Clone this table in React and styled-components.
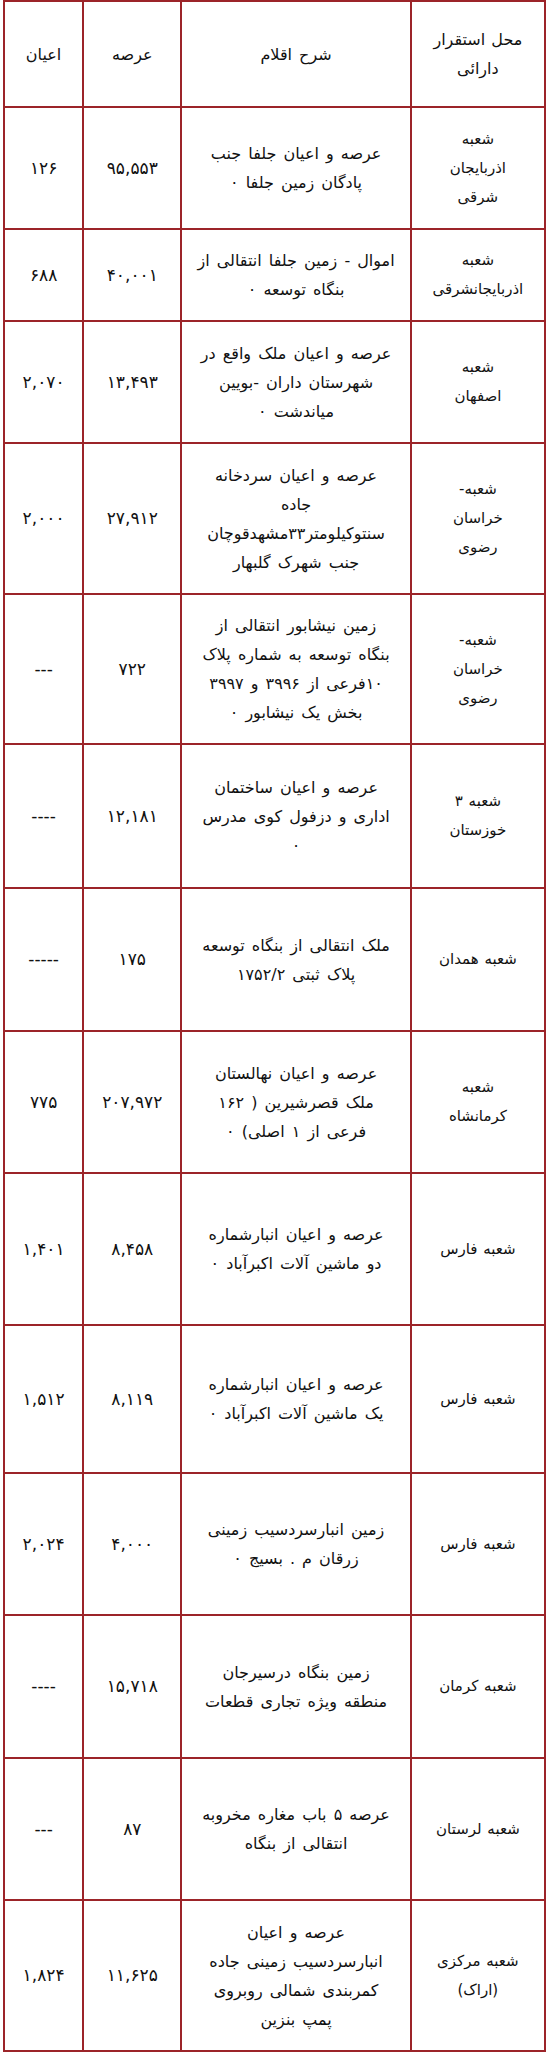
import React from "react";
import styled, { createGlobalStyle } from "styled-components";

const GlobalStyle = createGlobalStyle`
  html, body {
    margin: 0;
    padding: 0;
    background: #ffffff;
  }
  body {
    font-family: "DejaVu Sans", "Noto Sans", sans-serif;
    color: #111111;
  }
`;

// ستون‌ها از راست به چپ
const columns = [
  { key: "place", width: 134, kind: "place" },
  { key: "desc", width: 229, kind: "desc" },
  { key: "arse", width: 98, kind: "num" },
  { key: "ayan", width: 79, kind: "num" },
];

const header = {
  h: 106,
  place: ["محل استقرار", "دارائی"],
  desc: ["شرح اقلام"],
  arse: ["عرصه"],
  ayan: ["اعیان"],
};

const rows = [
  {
    h: 122,
    place: ["شعبه", "اذربایجان", "شرقی"],
    desc: ["عرصه و اعیان جلفا جنب", "پادگان زمین جلفا  ۰"],
    arse: "۹۵,۵۵۳",
    ayan: "۱۲۶",
  },
  {
    h: 92,
    place: ["شعبه", "اذربایجانشرقی"],
    desc: ["اموال - زمین جلفا انتقالی از", "بنگاه توسعه  ۰"],
    arse: "۴۰,۰۰۱",
    ayan: "۶۸۸",
  },
  {
    h: 122,
    place: ["شعبه", "اصفهان"],
    desc: ["عرصه و اعیان  ملک واقع در", "شهرستان داران -بویین", "میاندشت  ۰"],
    arse: "۱۳,۴۹۳",
    ayan: "۲,۰۷۰",
  },
  {
    h: 151,
    place: ["شعبه-", "خراسان", "رضوی"],
    desc: [
      "عرصه و اعیان سردخانه",
      "جاده",
      "سنتوکیلومتر۳۳مشهدقوچان",
      "جنب شهرک گلبهار",
    ],
    arse: "۲۷,۹۱۲",
    ayan: "۲,۰۰۰",
  },
  {
    h: 150,
    place: ["شعبه-", "خراسان", "رضوی"],
    desc: [
      "زمین نیشابور انتقالی از",
      "بنگاه توسعه به شماره پلاک",
      "۱۰فرعی از ۳۹۹۶ و ۳۹۹۷",
      "بخش یک نیشابور  ۰",
    ],
    arse: "۷۲۲",
    ayan: "---",
  },
  {
    h: 144,
    place: ["شعبه ۳", "خوزستان"],
    desc: ["عرصه  و اعیان ساختمان", "اداری و دزفول کوی مدرس", "۰"],
    arse: "۱۲,۱۸۱",
    ayan: "----",
  },
  {
    h: 143,
    place: ["شعبه همدان"],
    desc: ["ملک انتقالی از بنگاه توسعه", "پلاک ثبتی ۱۷۵۲/۲"],
    arse: "۱۷۵",
    ayan: "-----",
  },
  {
    h: 142,
    place: ["شعبه", "کرمانشاه"],
    desc: ["عرصه و اعیان نهالستان", "ملک  قصرشیرین ( ۱۶۲", "فرعی از ۱ اصلی)  ۰"],
    arse: "۲۰۷,۹۷۲",
    ayan: "۷۷۵",
  },
  {
    h: 152,
    place: ["شعبه فارس"],
    desc: ["عرصه و اعیان  انبارشماره", "دو ماشین آلات اکبرآباد  ۰"],
    arse: "۸,۴۵۸",
    ayan: "۱,۴۰۱",
  },
  {
    h: 148,
    place: ["شعبه فارس"],
    desc: ["عرصه و اعیان  انبارشماره", "یک ماشین آلات اکبرآباد  ۰"],
    arse: "۸,۱۱۹",
    ayan: "۱,۵۱۲",
  },
  {
    h: 142,
    place: ["شعبه فارس"],
    desc: ["زمین انبارسردسیب زمینی", "زرقان م . بسیج  ۰"],
    arse: "۴,۰۰۰",
    ayan: "۲,۰۲۴",
  },
  {
    h: 143,
    place: ["شعبه کرمان"],
    desc: ["زمین بنگاه درسیرجان", "منطقه ویژه تجاری قطعات"],
    arse: "۱۵,۷۱۸",
    ayan: "----",
  },
  {
    h: 142,
    place: ["شعبه لرستان"],
    desc: ["عرصه ۵ باب  مغاره مخروبه", "انتقالی از بنگاه"],
    arse: "۸۷",
    ayan: "---",
  },
  {
    h: 151,
    place: ["شعبه مرکزی", "(اراک)"],
    desc: [
      "عرصه و اعیان",
      "انبارسردسیب زمینی جاده",
      "کمربندی شمالی روبروی",
      "پمپ بنزین",
    ],
    arse: "۱۱,۶۲۵",
    ayan: "۱,۸۲۴",
  },
];

const Lines = ({ lines }) => {
  const list = Array.isArray(lines) ? lines : [lines];
  return list.map((line, i) => <Line key={i}>{line}</Line>);
};

const App = () => {
  return (
    <>
      <GlobalStyle />
      <Page dir="rtl">
        <Table>
          <colgroup>
            {columns.map((c) => (
              <col key={c.key} style={{ width: c.width }} />
            ))}
          </colgroup>
          <thead>
            <Row $h={header.h}>
              {columns.map((c) => (
                <HeadCell key={c.key} $kind={c.kind}>
                  <Lines lines={header[c.key]} />
                </HeadCell>
              ))}
            </Row>
          </thead>
          <tbody>
            {rows.map((row, index) => (
              <Row key={index} $h={row.h}>
                {columns.map((c) => (
                  <Cell key={c.key} $kind={c.kind}>
                    <Lines lines={row[c.key]} />
                  </Cell>
                ))}
              </Row>
            ))}
          </tbody>
        </Table>
      </Page>
    </>
  );
};

export default App;

const sizes = {
  place: "15px",
  desc: "16px",
  num: "17px",
};

const Page = styled.div`
  width: 546px;
`;

const Table = styled.table`
  width: 543px;
  border-collapse: collapse;
  table-layout: fixed;
  border: 2px solid #9c2429;
`;

const Row = styled.tr`
  height: ${(p) => p.$h}px;
`;

const Cell = styled.td`
  border: 2px solid #9c2429;
  padding: 0 4px;
  text-align: center;
  vertical-align: middle;
  font-size: ${(p) => sizes[p.$kind]};
  word-spacing: ${(p) => (p.$kind === "desc" ? "2px" : "1px")};
  line-height: 29px;
  white-space: nowrap;
`;

const HeadCell = styled(Cell).attrs({ as: "th" })`
  font-weight: normal;
  font-size: 16px;
`;

const Line = styled.div`
  display: block;
`;
